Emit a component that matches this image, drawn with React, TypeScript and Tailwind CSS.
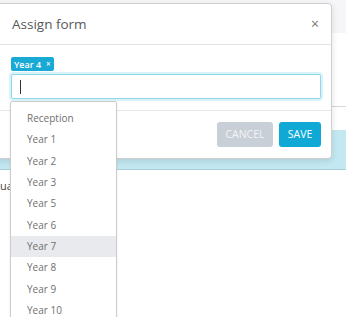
import React from "react";

const years = ["Reception", "Year 1", "Year 2", "Year 3", "Year 5", "Year 6", "Year 7", "Year 8", "Year 9", "Year 10"];

export default function App() {
  return (
    <div className="relative w-[346px] h-[317px] overflow-hidden bg-white font-['Open_Sans',sans-serif]">
      {/* page behind the modal */}
      <div className="h-[33px] bg-[#f6f6f8]" />
      <div className="h-[74px] border-b border-[#d6d6d6]" />
      <div className="h-[23px]" />
      <div className="h-[40px] bg-[#c3e8f2] border-b border-[#a6cfdb]" />
      <div className="pt-[9px] text-[11px] text-[#444] leading-[14px]">uac</div>

      {/* modal */}
      <div className="absolute left-[-20px] top-[3px] w-[352px] h-[156px] bg-white border border-[#cfcfcf] rounded-[4px] shadow-[0_2px_6px_rgba(0,0,0,0.12)]">
        <div className="h-[41px] flex items-center justify-between pl-[31px] pr-[12px] border-b border-[#e3e3e3]">
          <span className="text-[13.5px] text-[#585858]">Assign form</span>
          <span className="text-[14px] text-[#777] leading-none">×</span>
        </div>
        <div className="pl-[30px] pr-[10px] pt-[12px] h-[66px] border-b border-[#e6e6e6]">
          <div className="flex">
            <span className="flex items-center h-[14px] px-[3px] rounded-[2px] bg-[#18a9d5] text-white text-[9px] font-semibold leading-none">
              Year 4<span className="ml-[5px] text-[8px]">×</span>
            </span>
          </div>
          <div className="mt-[3px] h-[25px] border border-[#8fd7ea] rounded-[2px] shadow-[0_0_0_2px_rgba(150,220,238,0.35)] flex items-center pl-[8px]">
            <span className="w-[1px] h-[14px] bg-[#333]" />
          </div>
        </div>
        <div className="flex justify-end gap-[6px] pr-[10px] pt-[11px]">
          <button className="w-[56px] h-[25px] rounded-[3px] bg-[#c9cfd6] text-[#f3f4f6] text-[10.5px]">CANCEL</button>
          <button className="w-[42px] h-[25px] rounded-[3px] bg-[#10a9d6] text-white text-[10.5px]">SAVE</button>
        </div>
      </div>

      {/* dropdown */}
      <div className="absolute left-[10px] top-[101px] w-[107px] h-[230px] bg-white border border-[#cccccc] rounded-[2px] pt-[6px] shadow-[0_1px_3px_rgba(0,0,0,0.08)]">
        {years.map((y) => (
          <div
            key={y}
            className={
              "h-[21.3px] flex items-center pl-[16px] text-[10px] text-[#6f6f6f] " +
              (y === "Year 7" ? "bg-[#e8eaed] text-[#4a4a4a]" : "")
            }
          >
            {y}
          </div>
        ))}
      </div>
    </div>
  );
}
